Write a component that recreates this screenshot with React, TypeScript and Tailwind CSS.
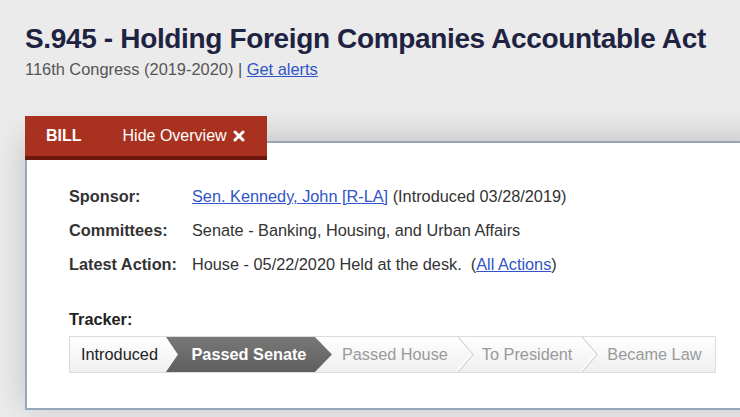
const Chevron = () => (
    <svg width="18" height="35" viewBox="0 0 18 35" className="shrink-0">
        <polyline points="1,0 16,17.5 1,35" fill="none" stroke="#d9d9d9" strokeWidth="1.5" />
        <polyline points="-1,0 14,17.5 -1,35" fill="none" stroke="#ffffff" strokeWidth="1.5" />
    </svg>
)

const Row = ({label, children}: {label: string, children: React.ReactNode}) => (
    <div className="flex h-5 items-center leading-5">
        <div className="w-[123px] shrink-0 font-bold text-[#333]">{label}</div>
        <div className="text-[#333]">{children}</div>
    </div>
)

export default function App() {
    return (
        <div className="min-h-[417px] w-[740px] overflow-hidden bg-[#ebebeb] font-['Liberation_Sans',Arial,sans-serif]">
            <div className="px-[25px] pt-[23px]">
                <h1 className="text-[28px] leading-[32px] font-bold tracking-[-0.35px] text-[#1f2342]">
                    S.945 - Holding Foreign Companies Accountable Act
                </h1>
                <p className="mt-[4px] text-[16.4px] leading-5 text-[#555]">
                    116th Congress (2019-2020) | <a href="#" className="text-[#2f55c6] underline">Get alerts</a>
                </p>
            </div>

            <div className="mt-[37px] pl-[25px]">
                <div className="relative z-10 flex h-[44px] w-[242px] items-center border-b-4 border-[#6c1710] bg-[#a8321f] pl-[21px] text-base text-white">
                    <span className="font-bold">BILL</span>
                    <span className="ml-[41px] flex items-center gap-[6px]">
                        Hide Overview
                        <svg width="12" height="12" viewBox="0 0 12 12">
                            <path d="M2 2 L10 10 M10 2 L2 10" stroke="#fff" strokeWidth="3" strokeLinecap="round" />
                        </svg>
                    </span>
                </div>

                <div className="-mt-[19px] w-[740px] border-2 border-r-0 border-[#95a7b8] bg-white pb-[35px] pl-[42px] pt-[43px] text-[16.3px] shadow-[0_-4px_30px_rgba(0,0,0,0.18)]">
                    <div className="flex flex-col gap-[14px]">
                        <Row label="Sponsor:">
                            <a href="#" className="text-[#2f55c6] underline">Sen. Kennedy, John [R-LA]</a> (Introduced 03/28/2019)
                        </Row>
                        <Row label="Committees:">Senate - Banking, Housing, and Urban Affairs</Row>
                        <Row label="Latest Action:">
                            House - 05/22/2020 Held at the desk.&nbsp; (<a href="#" className="text-[#2f55c6] underline">All Actions</a>)
                        </Row>
                    </div>

                    <div className="mt-[35px] leading-5 font-bold text-[#222]">Tracker:</div>

                    <div className="mt-[7px] flex h-[37px] w-[647px] items-center border border-[#dcdcdc] bg-gradient-to-b from-white to-[#efefef]">
                        <div className="pl-[11px] pr-[8px] text-[#222]">Introduced</div>
                        <div className="flex h-full w-[166px] items-center justify-center bg-gradient-to-b from-[#787878] to-[#5f5f5f] font-bold text-white [clip-path:polygon(0_0,calc(100%-17px)_0,100%_50%,calc(100%-17px)_100%,0_100%,12px_50%)]">
                            Passed Senate
                        </div>
                        <div className="pl-[10px] pr-[9px] text-[#9a9a9a]">Passed House</div>
                        <Chevron />
                        <div className="pl-[7px] pr-[9px] text-[#9a9a9a]">To President</div>
                        <Chevron />
                        <div className="pl-[8px] text-[#9a9a9a]">Became Law</div>
                    </div>
                </div>
            </div>
        </div>
    )
}
